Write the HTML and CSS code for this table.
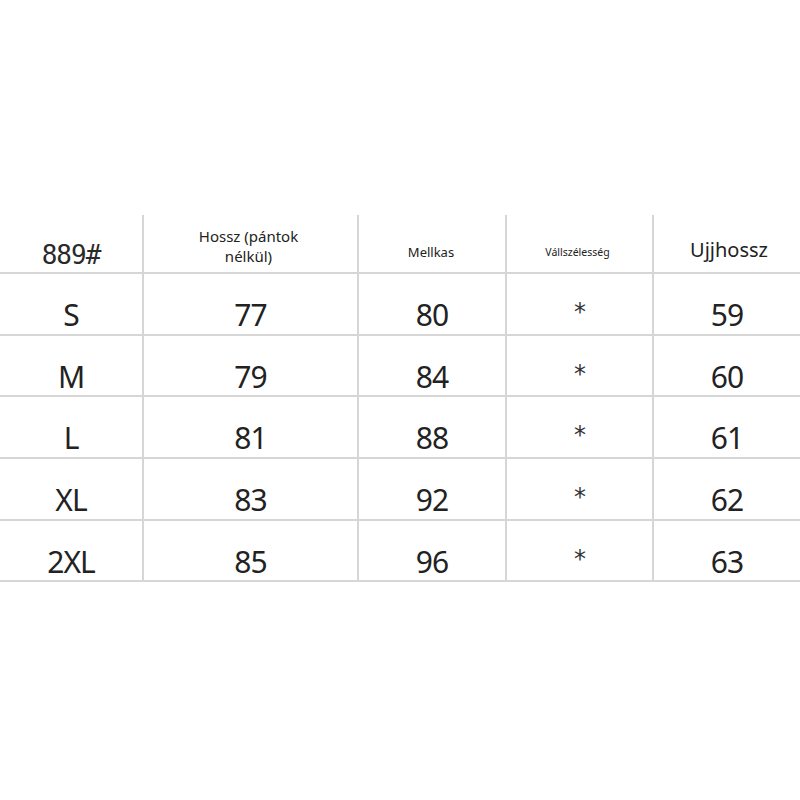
FILE: index.html
```html
<!DOCTYPE html>
<html lang="hu">
<head>
<meta charset="utf-8">
<title>889# méret táblázat</title>
<link rel="stylesheet" href="styles.css">
</head>
<body>
<div class="page">
  <div class="size-table">
    <div class="cell head h-code">889#</div>
    <div class="cell head h-len">Hossz (pántok<br>nélkül)</div>
    <div class="cell head h-chest">Mellkas</div>
    <div class="cell head h-shoulder">Vállszélesség</div>
    <div class="cell head h-sleeve last">Ujjhossz</div>

    <div class="cell val">S</div>
    <div class="cell val">77</div>
    <div class="cell val">80</div>
    <div class="cell val star">*</div>
    <div class="cell val last">59</div>

    <div class="cell val">M</div>
    <div class="cell val">79</div>
    <div class="cell val">84</div>
    <div class="cell val star">*</div>
    <div class="cell val last">60</div>

    <div class="cell val">L</div>
    <div class="cell val">81</div>
    <div class="cell val">88</div>
    <div class="cell val star">*</div>
    <div class="cell val last">61</div>

    <div class="cell val">XL</div>
    <div class="cell val">83</div>
    <div class="cell val">92</div>
    <div class="cell val star">*</div>
    <div class="cell val last">62</div>

    <div class="cell val">2XL</div>
    <div class="cell val">85</div>
    <div class="cell val">96</div>
    <div class="cell val star">*</div>
    <div class="cell val last">63</div>
  </div>
</div>
</body>
</html>
```
FILE: styles.css
```css
html, body {
  margin: 0;
  padding: 0;
  background: #ffffff;
}

.page {
  width: 800px;
  height: 800px;
  padding-top: 215px;
  box-sizing: border-box;
  color: #222222;
  font-family: "Noto Sans", "Open Sans", sans-serif;
}

.size-table {
  display: grid;
  grid-template-columns: 144px 215px 148px 147px 146px;
  grid-template-rows: 59px repeat(5, 61.7px);
}

.cell {
  box-sizing: border-box;
  display: flex;
  align-items: center;
  justify-content: center;
  text-align: center;
  border-bottom: 2px solid #d6d6d6;
  border-right: 2px solid #d6d6d6;
}

.cell.last {
  border-right: none;
}

.head {
  line-height: 1;
}

.h-code {
  font-family: "DejaVu Sans Mono", monospace;
  font-size: 26px;
  padding-top: 22px;
  letter-spacing: -1px;
  color: #2a2a2a;
}

.h-len {
  font-size: 15px;
  line-height: 20px;
  padding-top: 5px;
  padding-right: 4px;
}

.h-chest {
  font-size: 13px;
  padding-top: 18px;
  padding-right: 2px;
}

.h-shoulder {
  font-size: 10.5px;
  padding-top: 18px;
  padding-right: 4px;
}

.h-sleeve {
  font-size: 20px;
  padding-top: 12px;
  padding-left: 4px;
}

.val {
  font-size: 30px;
  line-height: 30px;
  padding-top: 22px;
  letter-spacing: -1px;
}

.star {
  font-family: "DejaVu Sans Mono", monospace;
  font-size: 24px;
  padding-top: 16px;
  color: #333333;
}
```
